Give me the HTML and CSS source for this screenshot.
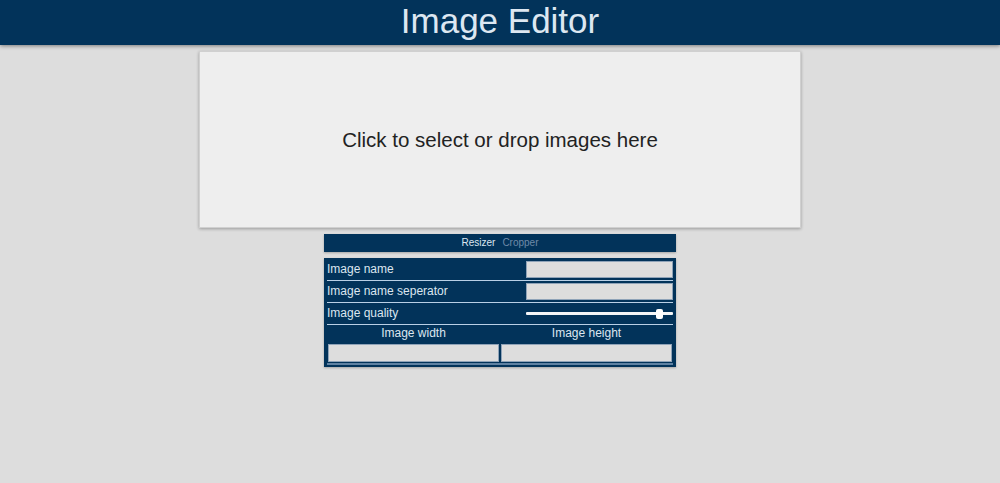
FILE: index.html
```html
<!DOCTYPE html>
<html>
<head>
<meta charset="utf-8">
<title>Image Editor</title>
<link rel="stylesheet" href="styles.css">
</head>
<body>
<header class="topbar"><h1 class="title">Image Editor</h1></header>
<main class="main">
  <div class="dropzone">Click to select or drop images here</div>
  <nav class="tabs"><span class="tab tab-active">Resizer</span><span class="tab">Cropper</span></nav>
  <section class="panel">
    <div class="row">
      <label class="label">Image name</label>
      <input class="field" type="text">
    </div>
    <div class="row">
      <label class="label">Image name seperator</label>
      <input class="field" type="text">
    </div>
    <div class="row">
      <label class="label">Image quality</label>
      <input class="range" type="range" min="0" max="100" value="93">
    </div>
    <div class="dims">
      <div class="dim">
        <div class="dim-label">Image width</div>
        <input class="field dim-field" type="text">
      </div>
      <div class="dim">
        <div class="dim-label">Image height</div>
        <input class="field dim-field" type="text">
      </div>
    </div>
  </section>
</main>
</body>
</html>
```
FILE: styles.css
```css
* { box-sizing: border-box; }
html, body { margin: 0; padding: 0; }
body {
  background: #dddddd;
  font-family: "Liberation Sans", Arial, sans-serif;
  height: 483px;
  overflow: hidden;
}
.topbar {
  height: 45px;
  background: #02335a;
  box-shadow: 0 1px 4px rgba(0, 0, 0, 0.45);
  position: relative;
  z-index: 1;
}
.title {
  margin: 0;
  text-align: center;
  font-weight: normal;
  font-size: 35px;
  line-height: 42px;
  color: #dde7f1;
}
.main {
  display: flex;
  flex-direction: column;
  align-items: center;
  padding-top: 6px;
}
.dropzone {
  width: 602px;
  height: 177px;
  background: #eeeeee;
  border: 1px solid #d0d0d0;
  box-shadow: 0 1px 3px rgba(0, 0, 0, 0.3);
  display: flex;
  align-items: center;
  justify-content: center;
  font-size: 20.5px;
  color: #222222;
}
.tabs {
  margin-top: 6px;
  width: 352px;
  height: 18px;
  background: #02335a;
  display: flex;
  justify-content: center;
  gap: 7px;
  font-size: 10px;
  line-height: 18px;
  box-shadow: 0 1px 2px rgba(0, 0, 0, 0.25);
}
.tab { color: #6f8aa8; }
.tab-active { color: #dce6f0; }
.panel {
  margin-top: 6px;
  width: 352px;
  height: 109px;
  background: #02335a;
  padding: 1px 3px 0 3px;
  box-shadow: 0 1px 2px rgba(0, 0, 0, 0.25);
}
.row {
  height: 22px;
  border-bottom: 1px solid #b9d0e6;
  display: flex;
  align-items: center;
}
.label {
  flex: 1;
  font-size: 12px;
  color: #dce6f0;
  padding-bottom: 1px;
}
.field {
  height: 17px;
  background: #dddddd;
  border: 1px solid #8fa3b8;
  margin: 0;
  padding: 0;
  font-size: 12px;
  outline: none;
}
.row .field { width: 147px; }
.range {
  -webkit-appearance: none;
  appearance: none;
  width: 147px;
  height: 10px;
  margin: 0;
  background: transparent;
}
.range::-webkit-slider-runnable-track {
  height: 3px;
  background: #f4f6f8;
  border-radius: 1px;
}
.range::-webkit-slider-thumb {
  -webkit-appearance: none;
  width: 7px;
  height: 10px;
  margin-top: -3.5px;
  background: #ffffff;
  border-radius: 2px;
  border: none;
}
.dims {
  display: flex;
  gap: 2px;
  padding: 0 1px 1px 1px;
  border-bottom: 2px solid #5f82a3;
}
.dim {
  flex: 1;
  display: flex;
  flex-direction: column;
}
.dim-label {
  text-align: center;
  font-size: 12px;
  line-height: 17px;
  color: #dce6f0;
  margin-bottom: 2px;
}
.dim-field { width: 100%; height: 18px; }
```
